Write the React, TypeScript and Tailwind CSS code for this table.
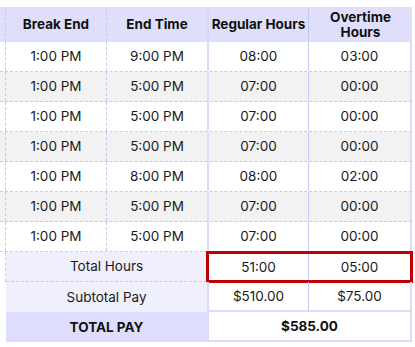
import React from 'react';

const rows = [
  { breakEnd: '1:00 PM', end: '9:00 PM', regular: '08:00', overtime: '03:00' },
  { breakEnd: '1:00 PM', end: '5:00 PM', regular: '07:00', overtime: '00:00' },
  { breakEnd: '1:00 PM', end: '5:00 PM', regular: '07:00', overtime: '00:00' },
  { breakEnd: '1:00 PM', end: '5:00 PM', regular: '07:00', overtime: '00:00' },
  { breakEnd: '1:00 PM', end: '8:00 PM', regular: '08:00', overtime: '02:00' },
  { breakEnd: '1:00 PM', end: '5:00 PM', regular: '07:00', overtime: '00:00' },
  { breakEnd: '1:00 PM', end: '5:00 PM', regular: '07:00', overtime: '00:00' },
];

const cols = 'grid grid-cols-[6px_101px_100px_102px_103px]';

export default function App() {
  return (
    <div className="w-[415px] h-[347px] bg-white overflow-hidden pt-[7px] text-[13.5px] text-[#1a1a1a] font-['Inter','Liberation_Sans',sans-serif]">
      <div className="w-[412px]">
        {/* header */}
        <div className={`${cols} h-[35px] bg-[#dfdffc] font-bold text-[#111] leading-[15px]`}>
          <div className="border-r border-dashed border-[#c9c9ef]" />
          <div className="flex items-center justify-center border-r border-dashed border-[#c9c9ef]">Break End</div>
          <div className="flex items-center justify-center">End Time</div>
          <div className="flex items-center justify-center border-l-2 border-[#d8d8f8] border-r border-r-dashed border-r-[#c9c9ef]">Regular Hours</div>
          <div className="flex items-center justify-center text-center px-6">Overtime Hours</div>
        </div>

        {/* body */}
        {rows.map((r, i) => (
          <div
            key={i}
            className={`${cols} h-[30px] border-b border-dashed border-[#c9c9ef] ${i % 2 === 1 ? 'bg-[#f2f2f2]' : 'bg-white'}`}
          >
            <div className="border-r border-dashed border-[#c9c9ef]" />
            <div className="flex items-center justify-center border-r border-dashed border-[#c9c9ef]">{r.breakEnd}</div>
            <div className="flex items-center justify-center">{r.end}</div>
            <div className="flex items-center justify-center border-l-2 border-solid border-[#dcdcfa] border-r border-r-dashed border-r-[#c9c9ef]">{r.regular}</div>
            <div className="flex items-center justify-center border-r-2 border-solid border-[#dcdcfa]">{r.overtime}</div>
          </div>
        ))}

        {/* totals */}
        <div className={`${cols} h-[30px]`}>
          <div className="border-r border-dashed border-[#c9c9ef]" />
          <div className="col-span-2 flex items-center justify-center bg-[#f0f0fd] border-b border-dashed border-[#c9c9ef]">Total Hours</div>
          <div className="col-span-2 grid grid-cols-[102px_103px] outline-[3px] outline-solid outline-[#c00000] -outline-offset-2">
            <div className="flex items-center justify-center border-l-2 border-[#dcdcfa] border-r border-r-dashed border-r-[#c9c9ef]">51:00</div>
            <div className="flex items-center justify-center border-r-2 border-[#dcdcfa]">05:00</div>
          </div>
        </div>
        <div className={`${cols} h-[30px]`}>
          <div />
          <div className="col-span-2 flex items-center justify-center bg-[#f0f0fd]">Subtotal Pay</div>
          <div className="flex items-center justify-center border-l-2 border-[#dcdcfa] border-b-2 border-b-[#dcdcfa] border-r border-r-dashed border-r-[#c9c9ef]">$510.00</div>
          <div className="flex items-center justify-center border-r-2 border-[#dcdcfa] border-b-2 border-b-[#dcdcfa]">$75.00</div>
        </div>
        <div className={`${cols} h-[30px]`}>
          <div />
          <div className="col-span-2 flex items-center justify-center bg-[#dedefc] font-bold text-[#111]">TOTAL PAY</div>
          <div className="col-span-2 flex items-center justify-center border-l-2 border-r-2 border-b-2 border-[#dcdcfa] font-bold text-[#111]">$585.00</div>
        </div>
      </div>
    </div>
  );
}
